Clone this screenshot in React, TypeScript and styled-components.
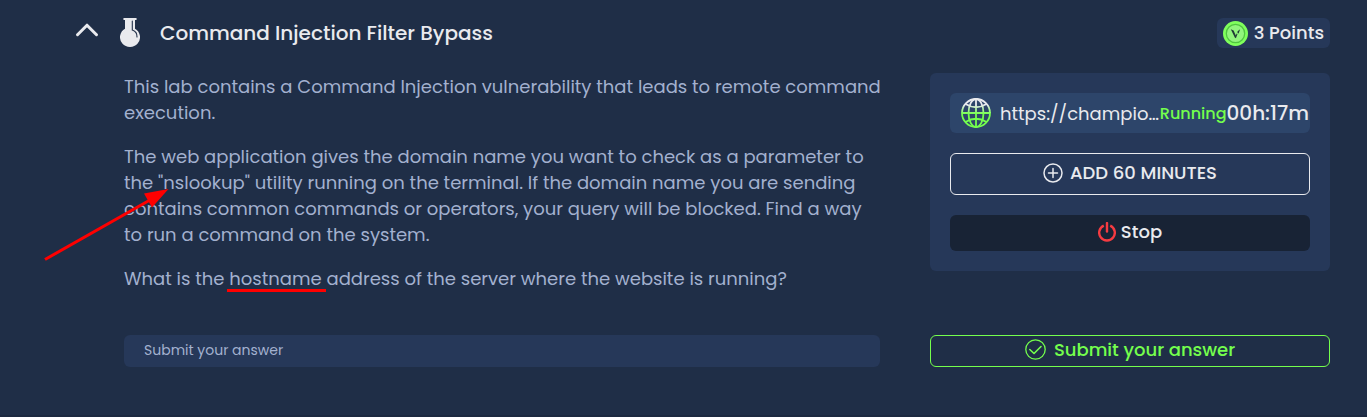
import React, { useId } from "react";
import styled, { createGlobalStyle, css } from "styled-components";

const color = {
  page: "#1f2e47",
  panel: "#263859",
  field: "#2d456a",
  dark: "#182335",
  text: "#a3b1cf",
  light: "#e9eaee",
  green: "#74ff4d",
  red: "#f63b41",
  mark: "#ff0000",
};

const GlobalStyle = createGlobalStyle`
  *, *::before, *::after { box-sizing: border-box; }
  body {
    margin: 0;
    background: ${color.page};
    color: ${color.light};
    font-family: Poppins, Inter, "Liberation Sans", sans-serif;
  }
  button, input { font: inherit; }
  svg { display: block; flex: none; }
`;

const Lab = styled.article`
  position: relative;
  padding: 18px 37px 48px 74px;
  border-bottom: 2px solid #1c2940;
`;

const Header = styled.header`
  display: flex;
  align-items: center;
  height: 30px;
`;

const Toggle = styled.button`
  display: flex;
  width: 26px;
  padding: 0 0 6px;
  margin-right: 20px;
  border: 0;
  background: none;
  color: ${color.light};
  cursor: pointer;
`;

const Title = styled.h2`
  flex: 1;
  margin: 0 0 0 20px;
  font-size: 20px;
  font-weight: 500;
  line-height: 30px;
`;

const Points = styled.div`
  display: flex;
  align-items: center;
  gap: 6px;
  height: 30px;
  padding: 0 6px;
  border-radius: 6px;
  background: ${color.panel};
  font-size: 18px;
  font-weight: 500;
  line-height: 28px;
`;

const Columns = styled.div`
  display: grid;
  grid-template-columns: minmax(0, 1fr) 400px;
  column-gap: 48px;
  align-items: start;
  margin: 25px 0 0 50px;
`;

const Description = styled.div`
  display: grid;
  gap: 18px;
  padding-top: 1px;
  color: ${color.text};
  font-size: 18px;
  line-height: 26px;

  p { margin: 0; }
`;

const Underlined = styled.span`
  position: relative;

  &::after {
    content: "";
    position: absolute;
    left: -2px;
    right: -4px;
    bottom: -1px;
    height: 3px;
    background: ${color.mark};
  }
`;

const Arrow = styled.svg`
  position: absolute;
  left: 40px;
  top: 184px;
  pointer-events: none;
`;

const Machine = styled.section`
  display: grid;
  grid-template-columns: minmax(0, 1fr);
  gap: 20px;
  padding: 20px;
  border-radius: 6px;
  background: ${color.panel};
`;

const Address = styled.div`
  display: flex;
  align-items: center;
  height: 40px;
  padding: 0 1px 0 11px;
  border-radius: 6px;
  background: ${color.field};
`;

const Url = styled.a`
  flex: 1 0 auto;
  margin-left: 9px;
  white-space: nowrap;
  color: ${color.light};
  font-size: 18px;
  text-decoration: none;
`;

const Status = styled.span`
  color: ${color.green};
  font-size: 16px;
  font-weight: 500;
`;

const Timer = styled.time`
  font-size: 20px;
  font-weight: 500;
`;

const variants = {
  outline: css`
    height: 42px;
    gap: 7px;
    border: 1px solid ${color.light};
    background: transparent;
    color: ${color.light};
  `,
  dark: css`
    height: 36px;
    gap: 5px;
    border: 0;
    background: ${color.dark};
    color: ${color.light};
  `,
  submit: css`
    height: 32px;
    gap: 8px;
    border: 1px solid ${color.green};
    background: transparent;
    color: ${color.green};
  `,
};

const Button = styled.button<{ $variant: keyof typeof variants }>`
  display: flex;
  align-items: center;
  justify-content: center;
  width: 100%;
  padding: 0 0 3px;
  border-radius: 6px;
  font-size: 18px;
  font-weight: 500;
  cursor: pointer;
  ${({ $variant }) => variants[$variant]}
`;

const AnswerForm = styled.form`
  display: grid;
  grid-template-columns: minmax(0, 1fr) 400px;
  column-gap: 50px;
  margin: 43px 0 0 50px;
`;

const Answer = styled.input`
  width: 100%;
  height: 32px;
  padding: 0 20px 2px;
  border: 0;
  border-radius: 6px;
  background: ${color.panel};
  color: ${color.light};
  font-size: 14px;

  &::placeholder { color: ${color.text}; opacity: 1; }
`;

const ChevronUp = () => (
  <svg width="26" height="18" viewBox="0 0 26 18" fill="none" stroke="currentColor" strokeWidth="3" strokeLinecap="round" strokeLinejoin="round" aria-hidden="true">
    <path d="M3.500 13.700 13 4.200l9.500 9.500" />
  </svg>
);

const Flask = () => (
  <svg width="20" height="30" viewBox="0 0 20 30" aria-hidden="true">
    <path fill={color.light} d="M4.200 0h11.600q1 0 1 1t-1 1H15v8.800a10 9.700 0 1 1-10 0V2h-.8q-1 0-1-1t1-1z" />
    <path fill="none" stroke={color.page} strokeWidth="1.100" strokeLinecap="round" d="M12.300 3v9q5 1.800 4.700 7" />
  </svg>
);

const Coin = () => (
  <svg width="25" height="25" viewBox="0 0 25 25" aria-hidden="true">
    <circle cx="12.500" cy="12.500" r="12.500" fill="#80ff5c" />
    <circle cx="12.500" cy="12.500" r="9.200" fill="#92f57d" stroke="#4fc540" strokeWidth="1.300" />
    <path fill="#1f3a35" d="m7.800 8.200 2.800 1.200 2.200 5 .9-2 .8.500-1.600 4.300-1.100-.7zM13.800 11l3.300-2.800-1.500 4.200-1.200-.4.400-1.500z" />
  </svg>
);

const Globe = () => {
  const id = useId();
  return (
    <svg width="30" height="30" viewBox="0 0 30 30" fill="none" stroke={`url(#${id})`} strokeWidth="1.800" aria-hidden="true">
      <defs>
        <linearGradient id={id} gradientUnits="userSpaceOnUse" x1="0" y1="7" x2="0" y2="16">
          <stop offset="0" stopColor={color.light} />
          <stop offset="1" stopColor={color.green} />
        </linearGradient>
      </defs>
      <circle cx="15" cy="15" r="14" />
      <ellipse cx="15" cy="15" rx="7.500" ry="14" />
      <path d="M15 1v28.010M1 15h28v.01M4.500 6q10.500 6.500 21 0M4.500 24q10.500-6.500 21 0" />
    </svg>
  );
};

const PlusCircle = () => (
  <svg width="20" height="20" viewBox="0 0 20 20" fill="none" stroke="currentColor" strokeWidth="1.500" strokeLinecap="round" aria-hidden="true">
    <circle cx="10" cy="10" r="9" />
    <path d="M10 5.500v9M5.500 10h9" />
  </svg>
);

const Power = () => (
  <svg width="18" height="20" viewBox="0 0 18 20" fill="none" stroke={color.red} aria-hidden="true">
    <path strokeWidth="2.400" d="M5.800 3.600a7.800 7.800 0 1 0 6.400 0" />
    <path strokeWidth="2.400" d="M9 1v8.500" strokeLinecap="round" />
  </svg>
);

const CheckCircle = () => (
  <svg width="21" height="21" viewBox="0 0 21 21" fill="none" stroke="currentColor" strokeWidth="1.300" strokeLinecap="round" strokeLinejoin="round" aria-hidden="true">
    <circle cx="10.500" cy="10.500" r="9.700" />
    <path strokeWidth="1.600" d="m4.800 10.500 4.200 4 7-7" />
  </svg>
);

export default function App() {
  return (
    <>
      <GlobalStyle />
      <Lab>
        <Header>
          <Toggle type="button" aria-label="Collapse lab" aria-expanded="true">
            <ChevronUp />
          </Toggle>
          <Flask />
          <Title>Command Injection Filter Bypass</Title>
          <Points>
            <Coin />
            3 Points
          </Points>
        </Header>

        <Columns>
          <Description>
            <p>
              This lab contains a Command Injection vulnerability that leads to remote command
              execution.
            </p>
            <p>
              The web application gives the domain name you want to check as a parameter to
              the "nslookup" utility running on the terminal. If the domain name you are sending
              contains common commands or operators, your query will be blocked. Find a way
              to run a command on the system.
            </p>
            <p>
              What is the <Underlined>hostname</Underlined> address of the server where the
              website is running?
            </p>
          </Description>

          <Machine aria-label="Lab machine">
            <Address>
              <Globe />
              <Url href="#machine">https://champio…</Url>
              <Status>Running</Status>
              <Timer>00h:17m</Timer>
            </Address>
            <Button type="button" $variant="outline">
              <PlusCircle />
              ADD 60 MINUTES
            </Button>
            <Button type="button" $variant="dark">
              <Power />
              Stop
            </Button>
          </Machine>
        </Columns>

        <AnswerForm onSubmit={(event) => event.preventDefault()}>
          <Answer type="text" placeholder="Submit your answer" aria-label="Submit your answer" />
          <Button type="submit" $variant="submit">
            <CheckCircle />
            Submit your answer
          </Button>
        </AnswerForm>

        <Arrow width="132" height="80" viewBox="0 0 132 80" aria-hidden="true">
          <path d="M5 75.500 110 16" stroke={color.mark} strokeWidth="3" />
          <path d="M128.500 5 104 9.500l8 14z" fill={color.mark} />
        </Arrow>
      </Lab>
    </>
  );
}
